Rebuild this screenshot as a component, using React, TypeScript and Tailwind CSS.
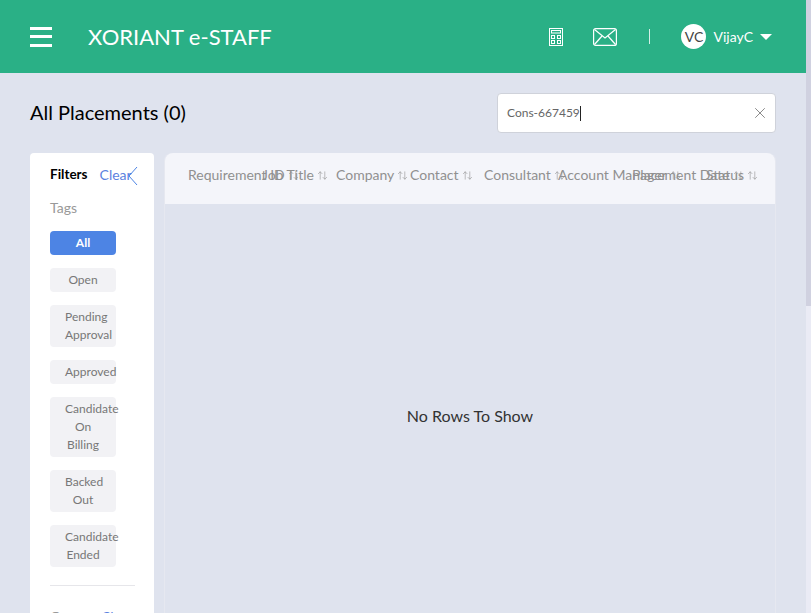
import React from "react";
import { ArrowUpDown, X } from "lucide-react";

const tags = [
  { label: ["All"], active: true },
  { label: ["Open"] },
  { label: ["Pending", "Approval"] },
  { label: ["Approved"] },
  { label: ["Candidate", "On", "Billing"] },
  { label: ["Backed", "Out"] },
  { label: ["Candidate", "Ended"] },
];

// header cells overlap in the original, so each one has a narrow fixed width
const columns = [
  "Requirement ID",
  "Job Title",
  "Company",
  "Contact",
  "Consultant",
  "Account Manager",
  "Placement Date",
  "Status",
];

const CalculatorIcon = () => (
  <svg width="14" height="18" viewBox="0 0 14 18" fill="none" stroke="currentColor" strokeWidth="1">
    <rect x="0.5" y="0.5" width="13" height="17" />
    <rect x="2.5" y="2.5" width="9" height="2.5" />
    <rect x="2.5" y="7.5" width="3" height="3" />
    <rect x="8.5" y="7.5" width="3" height="3" />
    <rect x="2.5" y="12.5" width="3" height="3" />
    <rect x="8.5" y="12.5" width="3" height="3" />
  </svg>
);

const MailIcon = () => (
  <svg width="24" height="18" viewBox="0 0 24 18" fill="none" stroke="currentColor" strokeWidth="1.2">
    <rect x="0.6" y="0.6" width="22.8" height="16.8" rx="2" />
    <path d="M1.5 1.5 L12 10 L22.5 1.5" />
    <path d="M1.5 16.5 L9 8" />
    <path d="M22.5 16.5 L15 8" />
  </svg>
);

const App: React.FC = () => {
  return (
    <div className="h-[613px] overflow-hidden flex bg-[#dfe3ee] font-['Lato',sans-serif]">
      <div className="flex-1 min-w-0 flex flex-col">
        <header className="h-[73px] shrink-0 bg-[#2ab086] flex items-center pl-[30px] text-white">
          <div className="w-[22px] flex flex-col gap-[5.5px] mr-[36px]">
            <span className="h-[3px] bg-white" />
            <span className="h-[3px] bg-white" />
            <span className="h-[3px] bg-white" />
          </div>
          <span className="text-[22px] leading-none">XORIANT e-STAFF</span>
          <div className="ml-auto flex items-center pr-[34px]">
            <CalculatorIcon />
            <span className="ml-[30px]"><MailIcon /></span>
            <span className="ml-[32px] h-[15px] w-px bg-white/80" />
            <span className="ml-[31px] w-[25px] h-[25px] rounded-full bg-white text-[#444] text-sm flex items-center justify-center">VC</span>
            <span className="ml-[7px] text-sm">VijayC</span>
            <span className="ml-[7px] w-0 h-0 border-x-[6px] border-x-transparent border-t-[6px] border-t-white" />
          </div>
        </header>

        <div className="flex-1 min-h-0 pl-[30px] pr-[30px]">
          <div className="flex items-center justify-between h-[80px]">
            <h1 className="text-xl leading-none text-black mt-[-2px]">All Placements (0)</h1>
            <div className="w-[279px] h-[40px] bg-white border border-[#cfd2da] rounded flex items-center pl-[9px] pr-[6px]">
              <span className="text-xs text-[#666]">Cons-667459</span>
              <span className="w-px h-[15px] bg-[#222]" />
              <X className="ml-auto text-[#888]" size={18} strokeWidth={1.3} />
            </div>
          </div>

          <div className="flex gap-[10px]">
            <aside className="w-[124px] shrink-0 h-[460px] bg-white rounded-t pl-[20px] pr-[19px] relative">
              <div className="flex items-center h-[42px] pt-[2px] text-sm">
                <span className="font-bold text-black text-[13.5px]">Filters</span>
                <span className="ml-[12px] text-[#5b82e0]">Clear</span>
              </div>
              <svg className="absolute top-[13px] left-[98px] text-[#4d84e4]" width="10" height="20" viewBox="0 0 10 20" fill="none" stroke="currentColor" strokeWidth="1">
                <path d="M9 1 L1 10 L9 19" />
              </svg>
              <div className="text-sm text-[#999] leading-[26px]">Tags</div>
              <div className="mt-[10px] flex flex-col gap-[13px] w-[66px]">
                {tags.map((tag) => (
                  <div
                    key={tag.label.join(" ")}
                    className={`rounded px-[15px] py-[3px] text-xs leading-[18px] text-center ${tag.active ? "bg-[#4d84e4] text-white font-bold" : "bg-[#f2f2f5] text-[#777]"}`}
                  >
                    {tag.label.map((line) => (
                      <div key={line} className="whitespace-nowrap">{line}</div>
                    ))}
                  </div>
                ))}
              </div>
              <div className="mt-[18px] border-t border-[#e6e6ea]" />
              <div className="mt-[24px] flex text-sm leading-none">
                <span className="text-[#999]">Groups</span>
                <span className="absolute left-[71px] text-[#5b82e0]">Clear</span>
              </div>
            </aside>

            <main className="flex-1 min-w-0 h-[460px] rounded-t-lg border-x border-[#e6e8f0] flex flex-col">
              <div className="h-[51px] shrink-0 bg-[#f4f5fa] rounded-t-lg flex items-center pl-[23px] pb-[7px] text-sm text-[#909090]">
                {columns.map((name) => (
                  <div key={name} className="w-[74px] shrink-0 flex items-center whitespace-nowrap">
                    <span>{name}</span>
                    <ArrowUpDown className="ml-[3px] shrink-0" size={11} strokeWidth={1.3} />
                  </div>
                ))}
              </div>
              <div className="flex-1 flex items-start justify-center pt-[200px] text-base text-[#333]">No Rows To Show</div>
            </main>
          </div>
        </div>
      </div>
      <div className="w-[5px] shrink-0 bg-[#eaebf5]">
        <div className="h-[306px] bg-[#d0d1e0]" />
      </div>
    </div>
  );
};

export default App;
